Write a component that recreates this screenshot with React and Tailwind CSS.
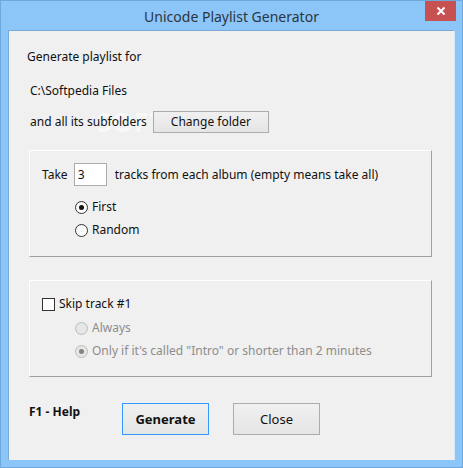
import React from 'react';

const font = { fontFamily: '"Noto Sans", "Open Sans", sans-serif' };

const Radio = ({ checked, disabled }) => (
  <span
    className={`w-[13px] h-[13px] rounded-full border flex items-center justify-center ${
      disabled ? 'border-[#bcbcbc] bg-[#e6e6e6]' : 'border-[#333] bg-gradient-to-b from-[#f4f4f4] to-white'
    }`}
  >
    {checked && (
      <span className={`w-[5px] h-[5px] rounded-full ${disabled ? 'bg-[#838383]' : 'bg-[#111]'}`} />
    )}
  </span>
);

const WinButton = ({ children, primary, className = '' }) => (
  <button
    className={`border bg-gradient-to-b from-[#f0f0f0] to-[#e5e5e5] text-[#111] leading-none ${
      primary ? 'border-[#3399ff]' : 'border-[#acacac]'
    } ${className}`}
  >
    {children}
  </button>
);

export default function App() {
  return (
    <div
      className="w-[463px] h-[468px] bg-[#8cc6f8] border border-[#6fa8dc] flex flex-col text-[12px] text-[#111]"
      style={font}
    >
      {/* title bar */}
      <div className="h-[29px] flex items-start relative">
        <div className="flex-1 h-full flex items-center justify-center text-[14px] text-[#2b3540] pt-[1px]">
          Unicode Playlist Generator
        </div>
        <div className="absolute right-[6px] top-0 w-[31px] h-[20px] bg-[#c75050] flex items-center justify-center">
          <svg width="10" height="10" viewBox="0 0 10 10">
            <path d="M1.5 1.5 L8.5 8.5 M8.5 1.5 L1.5 8.5" stroke="white" strokeWidth="2" />
          </svg>
        </div>
      </div>

      {/* client */}
      <div className="mx-[7px] h-[430px] bg-[#f0f0f0] border-t border-l border-[#7aa9d8] border-r border-r-[#d8e8f8] relative flex flex-col">
        <div className="absolute left-[88px] top-[72px] text-[26px] font-bold tracking-[1px] text-white/60 select-none pointer-events-none">
          SOFTPEDIA
        </div>

        <div className="pl-[18px] pt-[18px] leading-[16px] relative">Generate playlist for</div>
        <div className="pl-[21px] pt-[18px] leading-[16px] relative">C:\Softpedia Files</div>
        <div className="pl-[21px] pt-[12px] flex items-center gap-[6px] relative">
          <span className="leading-[16px]">and all its subfolders</span>
          <WinButton className="w-[116px] h-[22px]">Change folder</WinButton>
        </div>

        {/* group box 1 */}
        <div className="ml-[20px] mr-[22px] mt-[17px] h-[107px] border border-t-white border-l-white border-r-[#a0a0a0] border-b-[#a0a0a0] flex flex-col">
          <div className="flex items-center pl-[12px] pt-[12px]">
            <span className="leading-[16px]">Take</span>
            <input
              defaultValue="3"
              className="ml-[6px] w-[33px] h-[23px] border border-[#ababab] bg-white px-[3px] text-[12px] outline-none"
              style={font}
            />
            <span className="ml-[8px] leading-[16px]">tracks from each album (empty means take all)</span>
          </div>
          <div className="pl-[45px] pt-[13px] flex flex-col gap-[7px]">
            <div className="flex items-center gap-[4px] h-[16px]">
              <Radio checked />
              <span>First</span>
            </div>
            <div className="flex items-center gap-[4px] h-[16px]">
              <Radio />
              <span>Random</span>
            </div>
          </div>
        </div>

        {/* group box 2 */}
        <div className="ml-[20px] mr-[22px] mt-[23px] h-[97px] border border-t-white border-l-white border-r-[#a0a0a0] border-b-[#a0a0a0] flex flex-col">
          <div className="flex items-center gap-[4px] pl-[12px] pt-[15px] h-[31px]">
            <span className="w-[13px] h-[13px] border border-[#333] bg-white" />
            <span>Skip track #1</span>
          </div>
          <div className="pl-[45px] pt-[8px] flex flex-col gap-[7px] text-[#8d8d8d]">
            <div className="flex items-center gap-[4px] h-[16px]">
              <Radio disabled />
              <span>Always</span>
            </div>
            <div className="flex items-center gap-[4px] h-[16px]">
              <Radio disabled checked />
              <span>Only if it's called "Intro" or shorter than 2 minutes</span>
            </div>
          </div>
        </div>

        {/* footer */}
        <div className="flex items-start pl-[20px] mt-[26px]">
          <span className="font-bold leading-[16px] mt-[1px] w-[93px]">F1 - Help</span>
          <WinButton primary className="w-[87px] h-[32px] font-bold text-[13px]">Generate</WinButton>
          <WinButton className="ml-[24px] w-[87px] h-[32px] text-[13px]">Close</WinButton>
        </div>
      </div>
    </div>
  );
}
